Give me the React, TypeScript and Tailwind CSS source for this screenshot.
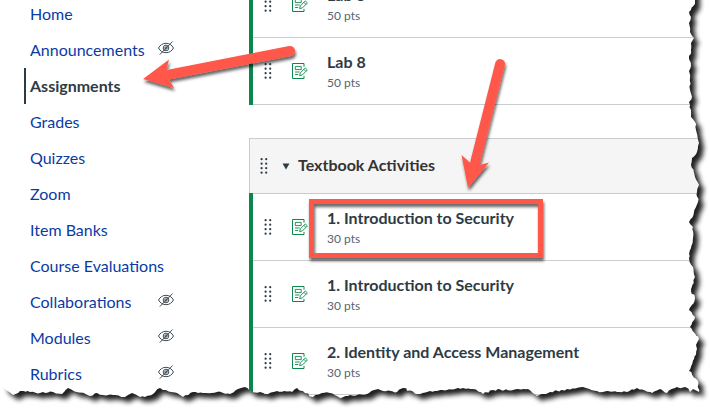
import React from "react";

type Point = [number, number];

const navItems = [
  { label: "Home" },
  { label: "Announcements", hidden: true },
  { label: "Assignments", active: true },
  { label: "Grades" },
  { label: "Quizzes" },
  { label: "Zoom" },
  { label: "Item Banks" },
  { label: "Course Evaluations" },
  { label: "Collaborations", hidden: true },
  { label: "Modules", hidden: true },
  { label: "Rubrics", hidden: true },
];

const rightEdge: Point[] = [
  [695, 4], [689, 12], [691, 17], [689, 23], [690, 32], [694, 38], [691, 43], [691, 50], [689, 59], [691, 66],
  [689, 71], [690, 78], [690, 90], [692, 97], [689, 102], [691, 110], [691, 117], [695, 122], [696, 130],
  [699, 143], [697, 152], [692, 158], [691, 165], [695, 177], [699, 185], [697, 192], [698, 202], [694, 212],
  [689, 222], [693, 227], [693, 238], [691, 248], [689, 258], [693, 267], [695, 277], [691, 291], [695, 298],
  [689, 310], [695, 317], [690, 327], [699, 339], [696, 345], [697, 349], [694, 359], [689, 371], [698, 381], [699, 392],
];

const bottomEdge: Point[] = [
  [693, 389], [690, 392], [685, 387], [675, 388], [667, 393], [660, 389], [652, 393], [637, 388], [627, 392],
  [617, 392], [603, 392], [597, 391], [583, 387], [567, 389], [550, 392], [537, 396], [528, 389], [513, 390],
  [493, 390], [483, 394], [473, 389], [463, 388], [447, 390], [437, 391], [427, 392], [417, 394], [403, 388],
  [397, 392], [383, 391], [378, 389], [367, 394], [350, 395], [340, 398], [330, 393], [322, 393], [313, 397],
  [305, 393], [297, 388], [292, 392], [277, 391], [268, 394], [260, 392], [252, 392], [245, 387], [238, 389],
  [230, 394], [217, 392], [203, 393], [193, 392], [183, 397], [177, 393], [163, 390], [160, 388], [153, 394],
  [145, 397], [140, 397], [132, 393], [125, 397], [113, 395], [103, 395], [97, 393], [90, 396], [77, 392],
  [68, 388], [62, 394], [53, 392], [40, 393], [20, 391], [13, 395], [3, 387],
];

// Breaks each stretch of the edge into short uneven steps so it reads as torn paper.
function roughen(points: Point[]): string {
  let seed = 7;
  const noise = () => {
    seed = (seed * 16807) % 2147483647;
    return seed / 2147483647 - 0.5;
  };
  const out: string[] = [];
  points.forEach(([x, y], i) => {
    out.push(`${x} ${y}`);
    const next = points[i + 1];
    if (!next) return;
    const steps = Math.floor(Math.hypot(next[0] - x, next[1] - y) / 2.5);
    for (let s = 1; s < steps; s++) {
      const t = s / steps;
      out.push(
        `${(x + (next[0] - x) * t + noise() * 1.8).toFixed(1)} ${(y + (next[1] - y) * t + noise() * 1.8).toFixed(1)}`,
      );
    }
  });
  return out.join("L");
}

const paper = `M3 -20L695 -20L${roughen([...rightEdge, ...bottomEdge])}Z`;

function HiddenIcon() {
  return (
    <svg className="h-4 w-4" viewBox="0 0 16 16" fill="none" stroke="#2d3b45" strokeWidth="0.9">
      <path d="M.5 8C2.2 4.9 4.8 3.3 8 3.3S13.8 4.9 15.5 8C13.8 11.1 11.2 12.7 8 12.7S2.2 11.1.5 8Z" />
      <circle cx="8" cy="8" r="2.8" />
      <circle cx="8" cy="8" r="1.2" />
      <path d="M1.8 14.6 14.6 1.5" />
    </svg>
  );
}

function DragHandle() {
  return (
    <svg className="h-4 w-2 shrink-0" viewBox="0 0 8 16" fill="#2d3b45">
      {[1.6, 6.2].map((x) =>
        [1.2, 5.7, 10.2, 14.7].map((y) => <circle key={`${x}-${y}`} cx={x} cy={y} r="1.1" />),
      )}
    </svg>
  );
}

function AssignmentIcon() {
  return (
    <svg className="h-4 w-4 shrink-0" viewBox="0 0 16 16" fill="none" stroke="#0b874b">
      <path d="M12 3.7V.5H.5v15H12v-2.6" />
      <path d="M3.3 3.4h5.9v3.2H3.3zM3 9h4.7M3 11.5h3.2" strokeWidth="0.9" />
      <path d="m7.6 12.6.7-2.7 5-5 2.1 2-5 5-2.8.7ZM11.8 6.3l2.1 2.1" strokeWidth="0.9" />
    </svg>
  );
}

function Row({ title, points }: { title: string; points: number }) {
  return (
    <li className="flex h-[67px] items-center border-b border-[#c7cdd1]">
      <div className="-my-px h-[68px] w-1 shrink-0 bg-[#0b874b]" />
      <div className="ml-[11px] flex">
        <DragHandle />
      </div>
      <div className="ml-5 flex">
        <AssignmentIcon />
      </div>
      <div className="ml-[19px] pt-0.5">
        <div className="text-base leading-[22px] font-bold whitespace-nowrap text-[#2d3b45]">{title}</div>
        <div className="text-xs leading-5 text-[#556572]">{points} pts</div>
      </div>
    </li>
  );
}

function Annotations() {
  return (
    <svg className="pointer-events-none absolute inset-0" width="710" height="409" viewBox="0 0 710 409">
      <defs>
        <filter id="lift" x="-20%" y="-20%" width="150%" height="150%">
          <feDropShadow dx="1" dy="3" stdDeviation="1.6" floodColor="#000" floodOpacity="0.6" />
        </filter>
        <filter id="tear" filterUnits="userSpaceOnUse" x="-10" y="-30" width="730" height="450">
          <feOffset in="SourceAlpha" dx="5" dy="5" result="moved" />
          <feGaussianBlur in="moved" stdDeviation="2.8" result="soft" />
          <feComponentTransfer in="soft" result="shade">
            <feFuncA type="linear" slope="0.88" />
          </feComponentTransfer>
          <feComposite in="shade" in2="SourceAlpha" operator="out" />
        </filter>
      </defs>
      <g fill="#ff594c" filter="url(#lift)">
        <path d="M143 79 169 59.5 166.5 70 289 46A5 5 0 0 1 291 56L169 79.500 174 88Z" />
        <path d="M468 188 461.500 155 470 162.500 495.500 62A5 5 0 0 1 505 64.500L479.500 165 489 162.500Z" />
        <path fillRule="evenodd" d="M309 199H543V258H309ZM314 204V253H538V204Z" />
      </g>
      <path d={`M-1 -30H711V410H-1Z${paper}`} fill="white" fillRule="evenodd" />
      <path d={paper} fill="black" filter="url(#tear)" />
    </svg>
  );
}

export default function App() {
  return (
    <div className="relative flex h-[409px] w-[710px] overflow-hidden bg-white font-['Lato','Liberation_Sans',sans-serif]">
      <nav className="-mt-1 w-[249px] shrink-0 pl-6">
        {navItems.map((item) => (
          <div
            key={item.label}
            className={`flex h-9 items-center border-l-2 pl-1 text-base ${
              item.active ? "border-[#2d3b45] font-bold text-[#2d3b45]" : "border-transparent text-[#0a3ba5]"
            }`}
          >
            <span className="w-32 whitespace-nowrap">{item.label}</span>
            {item.hidden && (
              <span className="-mt-1">
                <HiddenIcon />
              </span>
            )}
          </div>
        ))}
      </nav>
      <main className="-mt-[29px] w-[461px] shrink-0">
        <ul>
          <Row title="Lab 5" points={50} />
          <Row title="Lab 8" points={50} />
        </ul>
        <section className="mt-[33px]">
          <header className="flex h-14 items-center border border-[#c7cdd1] bg-[#f5f5f5] pl-2.5">
            <DragHandle />
            <svg className="ml-3.5 h-2 w-2" viewBox="0 0 8 8" fill="#2d3b45">
              <path d="M.5 1.5h7L4 7.500Z" />
            </svg>
            <h2 className="ml-2 pb-0.5 text-base font-bold text-[#333]">Textbook Activities</h2>
          </header>
          <ul>
            <Row title="1. Introduction to Security" points={30} />
            <Row title="1. Introduction to Security" points={30} />
            <Row title="2. Identity and Access Management" points={30} />
          </ul>
        </section>
      </main>
      <Annotations />
    </div>
  );
}
